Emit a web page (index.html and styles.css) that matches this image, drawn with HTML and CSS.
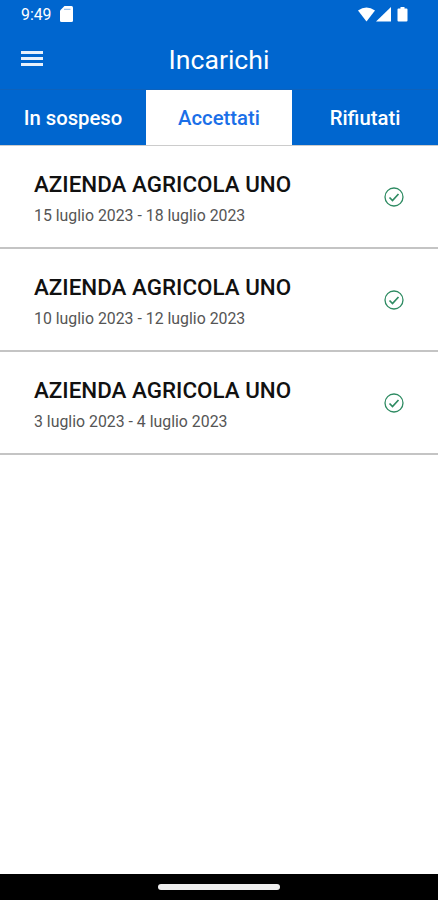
FILE: index.html
```html
<!DOCTYPE html>
<html lang="it">
<head>
    <meta charset="UTF-8">
    <meta name="viewport" content="width=device-width, initial-scale=1.0">
    <title>Incarichi</title>
    <link rel="stylesheet" href="styles.css">
</head>
<body>
    <header>
        <div class="status">
            <span class="time">9:49</span>
            <svg class="sd" width="13" height="16" viewBox="0 0 13 16">
                <path d="M4.500 0h7q1.500 0 1.500 1.500v13q0 1.500-1.500 1.500h-10Q0 16 0 14.500V4.500z" fill="#fff"/>
                <path d="M4 3.300h6.500" stroke="#0066cf" stroke-width=".8" opacity=".6"/>
            </svg>
            <svg class="signals" width="50" height="15" viewBox="0 0 50 15" fill="#fff">
                <path d="M0 3.500Q8.500-2.500 17 3.500L8.500 14.500z"/>
                <path d="M33 0v14.500H18z"/>
                <path d="M42.500 0h4v1.500h2q1 0 1 1v11q0 1-1 1h-8q-1 0-1-1v-11q0-1 1-1h2z"/>
            </svg>
        </div>
        <div class="bar">
            <a href="#" class="menu"><span></span><span></span><span></span></a>
            <h1>Incarichi</h1>
        </div>
    </header>
    <nav class="tabs">
        <a href="#">In sospeso</a>
        <a href="#" class="active">Accettati</a>
        <a href="#">Rifiutati</a>
    </nav>
    <ul class="list">
        <li>
            <div>
                <h2>AZIENDA AGRICOLA UNO</h2>
                <p>15 luglio 2023 - 18 luglio 2023</p>
            </div>
            <svg class="check" width="20" height="20" viewBox="0 0 20 20">
                <circle cx="10" cy="10" r="9"/>
                <path d="M5.500 10.500l3 3 6-6.500"/>
            </svg>
        </li>
        <li>
            <div>
                <h2>AZIENDA AGRICOLA UNO</h2>
                <p>10 luglio 2023 - 12 luglio 2023</p>
            </div>
            <svg class="check" width="20" height="20" viewBox="0 0 20 20">
                <circle cx="10" cy="10" r="9"/>
                <path d="M5.500 10.500l3 3 6-6.500"/>
            </svg>
        </li>
        <li>
            <div>
                <h2>AZIENDA AGRICOLA UNO</h2>
                <p>3 luglio 2023 - 4 luglio 2023</p>
            </div>
            <svg class="check" width="20" height="20" viewBox="0 0 20 20">
                <circle cx="10" cy="10" r="9"/>
                <path d="M5.500 10.500l3 3 6-6.500"/>
            </svg>
        </li>
    </ul>
    <footer><span></span></footer>
</body>
</html>
```

FILE: styles.css
```css
* {
    margin: 0;
    padding: 0;
    box-sizing: border-box;
}
body {
    display: flex;
    flex-direction: column;
    height: 100vh;
    background: #fff;
    font-family: Roboto, "Liberation Sans", sans-serif;
}
a {
    color: #fff;
    text-decoration: none;
}
header {
    height: 89px;
    background: #0066cf;
    color: #fff;
}
.status {
    display: flex;
    align-items: center;
    height: 28px;
    padding: 0 30px 0 21px;
}
.time {
    width: 39px;
    font-size: 15.8px;
}
.signals {
    margin-left: auto;
}
.bar {
    display: grid;
    grid-template-columns: 60px 1fr 60px;
    align-items: center;
    height: 61px;
}
.menu {
    display: flex;
    flex-direction: column;
    gap: 3px;
    width: 22px;
    margin: 0 0 1px 21px;
}
.menu span {
    height: 3px;
    background: #e8f1fc;
}
h1 {
    padding-top: 2px;
    font-size: 26.6px;
    font-weight: 400;
    text-align: center;
}
.tabs {
    display: grid;
    grid-template-columns: repeat(3, 1fr);
    height: 57px;
    border-top: 1px solid #0d62bd;
    border-bottom: 1px solid #ccc;
    background: #0066cf;
}
.tabs a {
    display: flex;
    align-items: center;
    justify-content: center;
    padding-top: 1px;
    font-size: 20.3px;
    font-weight: 500;
}
.tabs .active {
    background: #fff;
    color: #1a6fe8;
}
.list {
    flex: 1;
    list-style: none;
}
.list li {
    display: flex;
    align-items: center;
    justify-content: space-between;
    height: 103px;
    padding: 0 34px;
    border-bottom: 2px solid #c4c4c4;
}
.list h2 {
    padding-top: 6px;
    font-size: 22.4px;
    font-weight: 500;
    line-height: 30px;
    color: #111;
}
.list p {
    margin-top: 3px;
    font-size: 15.85px;
    line-height: 28px;
    color: #555;
}
.check {
    fill: none;
    stroke: #2e8b62;
    stroke-width: 1.3;
}
.check path {
    stroke-width: 1.7;
}
footer {
    display: flex;
    justify-content: center;
    height: 26px;
    padding-top: 10px;
    background: #000;
}
footer span {
    width: 122px;
    height: 6px;
    border-radius: 3px;
    background: #eee;
}
```
